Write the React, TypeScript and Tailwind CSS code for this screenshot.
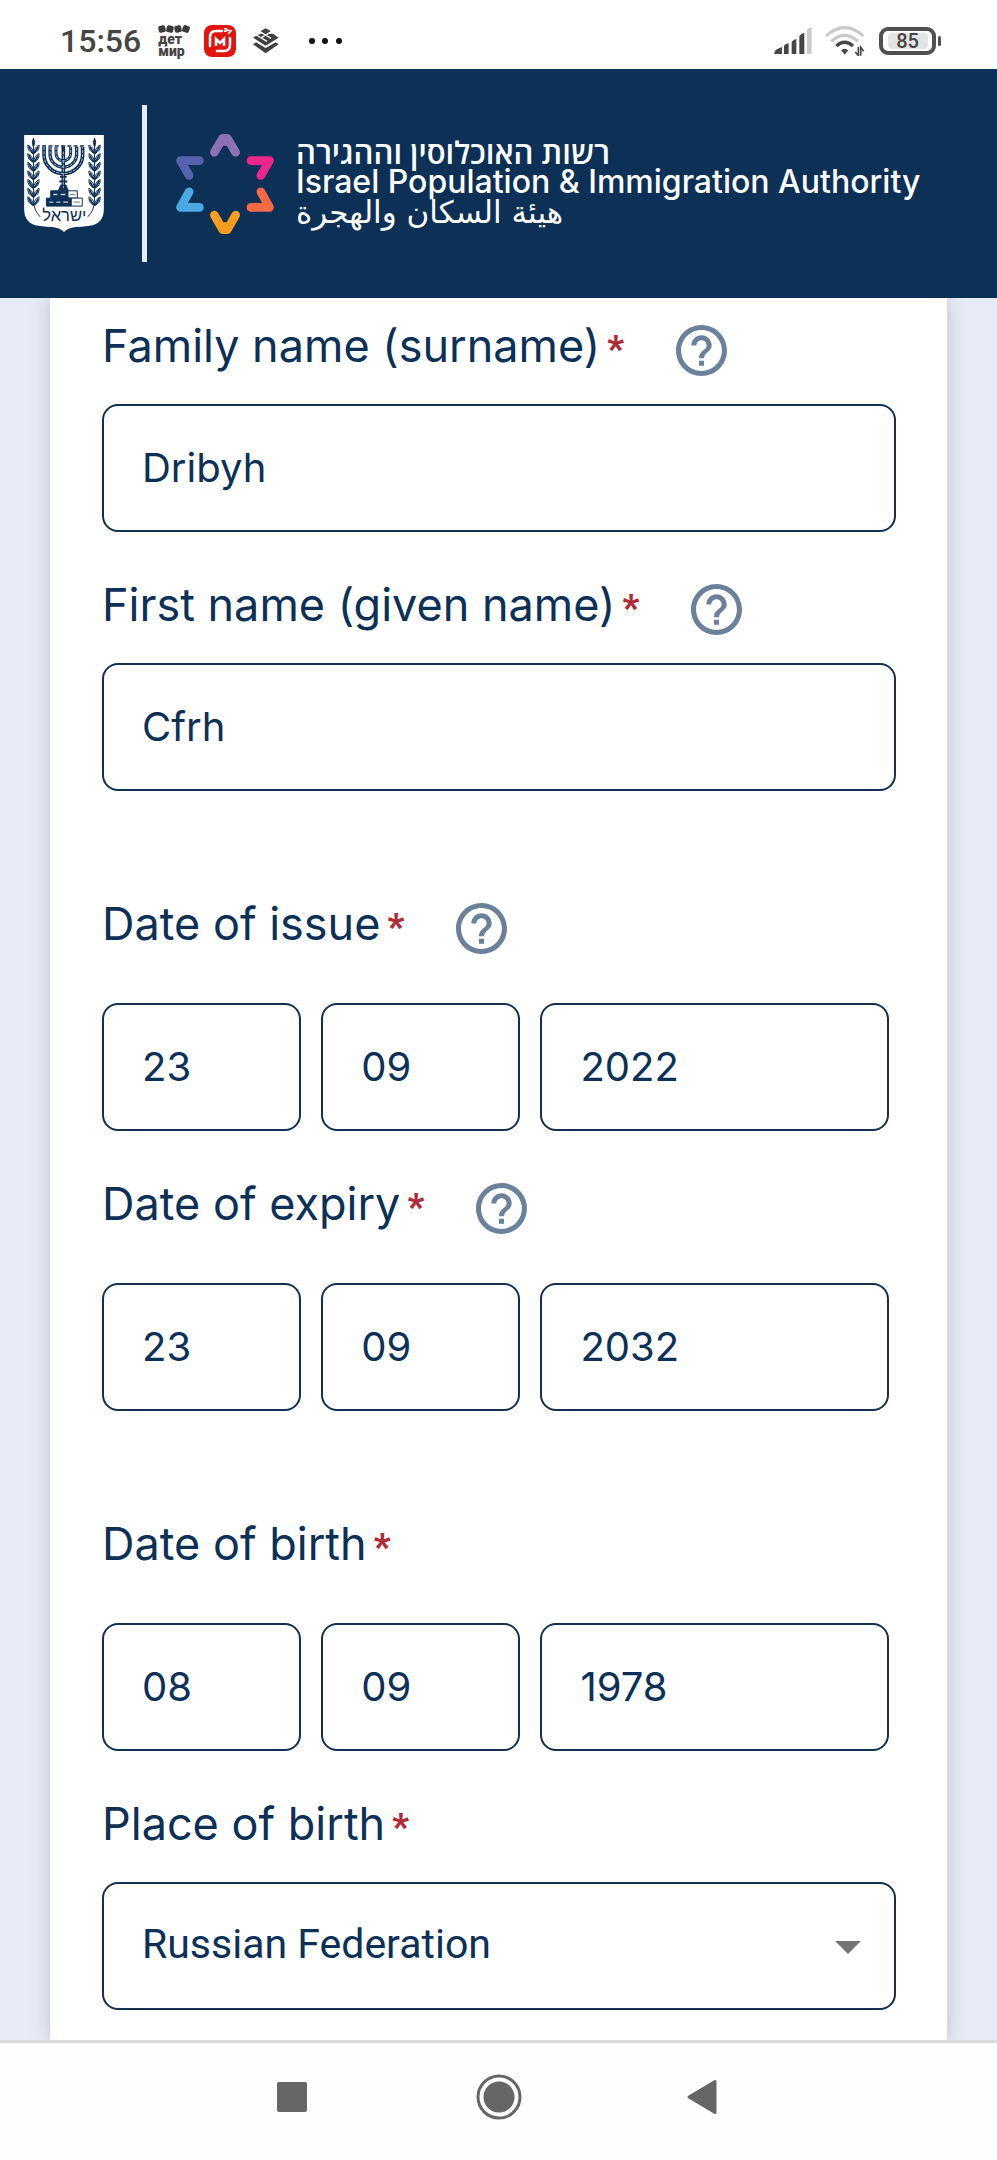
import React from "react";

const leafRows = [34, 60, 86, 112, 138, 164, 190];

function Branch() {
  return (
    <g stroke="#0d3056" fill="none" strokeWidth="3">
      <path d="M28 12V200Q30 228 48 246" />
      <path d="M28 10q-7 12 0 26q7-14 0-26Z" fill="#0d3056" />
      {leafRows.map((y) => (
        <g key={y} transform={`translate(28 ${y})`}>
          <path d="M0 22Q-18 16-17-4Q-2 4 0 22Z" />
          <path d="M0 22Q-10 12-14 0" strokeWidth="5" />
          <path d="M0 22Q18 16 17-4Q2 4 0 22Z" />
          <path d="M2 20Q8 14 14 2" strokeWidth="5" />
        </g>
      ))}
    </g>
  );
}

function Emblem() {
  return (
    <svg viewBox="0 0 240 292" className="h-[97px] w-20 shrink-0" role="img" aria-label="State emblem">
      <path
        d="M0 0H240V222Q240 262 206 272Q190 276 158 277Q132 278 120 292Q108 278 82 277Q50 276 34 272Q0 262 0 222Z"
        fill="#fff"
      />
      <Branch />
      <g transform="translate(240 0) scale(-1 1)">
        <Branch />
      </g>
      <g fill="none" stroke="#0d3056">
        <path d="M60 36V60A58 56 0 0 0 176 60V36" strokeWidth="11" />
        <path d="M78 36V58A40 39 0 0 0 158 58V36" strokeWidth="10" />
        <path d="M96 36V56A22 22 0 0 0 140 56V36" strokeWidth="9" />
        <path d="M118 34V166" strokeWidth="11" />
        <path d="M108 126H128M106 140H130" strokeWidth="6" />
        <path d="M110 150L102 167H134L126 150Z" fill="#0d3056" />
      </g>
      <g fill="none" stroke="#fff" strokeWidth="2" strokeDasharray="9 4">
        <path d="M60 36V60A58 56 0 0 0 176 60V36" />
        <path d="M78 36V58A40 39 0 0 0 158 58V36" />
        <path d="M96 36V56A22 22 0 0 0 140 56V36" />
        <path d="M118 50V160" />
      </g>
      <g stroke="#0d3056" strokeWidth="3">
        <path d="M54 33H182" strokeWidth="5" strokeDasharray="12 7" />
        <path d="M80 168H132V190H80Z" fill="#0d3056" />
        <path d="M132 168H160V190H132Z" fill="#fff" />
        <path d="M67 190H142V214H67Z" fill="#0d3056" />
        <path d="M142 190H175V214H142Z" fill="#fff" />
        <path d="M88 179H100M110 179H124M76 202H88M97 202H109M118 202H132" stroke="#c5d0dc" strokeWidth="4" />
        <path d="M138 179H154M149 202H168" strokeWidth="2" />
      </g>
      <text
        x="121"
        y="260"
        textAnchor="middle"
        fontSize="50"
        fill="#0d3056"
        className="font-['Liberation_Sans',sans-serif]"
      >
        ישראל
      </text>
    </svg>
  );
}

function Star() {
  return (
    <svg
      viewBox="528 128 294 301"
      className="h-[100px] w-[98px] shrink-0"
      fill="none"
      strokeWidth="26"
      strokeLinecap="round"
      strokeLinejoin="round"
      aria-hidden="true"
    >
      <path d="M643 183L668 141H682L707 183M668 150H682" stroke="#8c72b5" />
      <path d="M598 208H541L567 253" stroke="#5562ae" />
      <path d="M753 208H809L783 253" stroke="#ec268a" />
      <path d="M567 302L541 349H598" stroke="#4aa9e2" />
      <path d="M783 302L809 349H753" stroke="#f26a43" />
      <path d="M643 372L668 416H682L707 372M668 407H682" stroke="#f99d20" />
    </svg>
  );
}

function StatusBar() {
  return (
    <div className="flex h-[69px] items-center justify-between bg-white pt-3 pr-14 pl-[60px] text-[#454545]">
      <div className="flex items-center">
        <span className="font-['Roboto',sans-serif] text-[32px] leading-8 font-medium">15:56</span>
        <div className="ml-[17px] flex w-8 flex-col items-start">
          <svg viewBox="0 0 32 8" className="h-2 w-8" fill="#3a3a3a" aria-hidden="true">
            <rect x="0.500" y="0.500" width="7" height="7" rx="2" transform="rotate(-12 4 4)" />
            <rect x="8.500" y="0.500" width="7" height="7" rx="2" transform="rotate(12 12 4)" />
            <rect x="16.500" y="0.500" width="7" height="7" rx="2" transform="rotate(-12 20 4)" />
            <rect x="24.500" y="0.500" width="7" height="7" rx="2" transform="rotate(20 28 4)" />
          </svg>
          <span className="font-['Roboto',sans-serif] text-[14px] leading-3 font-black">дет</span>
          <span className="font-['Roboto',sans-serif] text-[14px] leading-3 font-black">мир</span>
        </div>
        <svg viewBox="0 0 32 32" className="ml-3.5 size-8" aria-hidden="true">
          <rect width="32" height="32" rx="8" fill="#e1150f" />
          <path
            d="M18 6H12Q6 6 6 12V21M26 13V20Q26 26 20 26H13"
            fill="none"
            stroke="#fff"
            strokeWidth="2.500"
            strokeLinecap="round"
          />
          <path d="M12 21V14L16 18L20 14V21" fill="none" stroke="#fff" strokeWidth="2.500" />
          <path d="M20 4q3-1 3 1q0 2-3 1M23 5l4 1l-3 3" fill="none" stroke="#fff" strokeWidth="1.500" />
        </svg>
        <svg viewBox="0 0 78 78" className="ml-[17px] size-[26px]" aria-hidden="true">
          <path d="M0 49L9 43L38 60L68 43L77 49L38 76Z" fill="#404040" />
          <path d="M0 29L22 17L60 17L77 29L38 53Z" fill="#404040" />
          <path d="M38 1L54 10L38 20L22 10Z" fill="#404040" />
          <path d="M20 11L38 21L56 11M38 21L22 31M38 21L54 31M10 21L42 40" fill="none" stroke="#fff" strokeWidth="4" />
        </svg>
        <svg viewBox="0 0 34 6" className="ml-[30px] h-1.5 w-[34px]" fill="#111" aria-hidden="true">
          <circle cx="3" cy="3" r="3" />
          <circle cx="16" cy="3" r="3" />
          <circle cx="30" cy="3" r="3" />
        </svg>
      </div>
      <div className="flex items-center">
        <svg viewBox="0 0 114 84" className="h-7 w-[38px]" fill="#454545" aria-hidden="true">
          <path d="M1 81Q0 72 10 66L24 60V81Z" />
          <path d="M30 56Q36 50 44 49V81H30ZM53 44Q59 38 67 36V81H53ZM76 27Q82 20 91 17V81H76Z" />
          <path d="M99 8Q105 2 113 1V81H99Z" fill="#cacaca" />
        </svg>
        <svg viewBox="0 0 120 90" className="ml-[13px] h-[30px] w-10" fill="none" strokeWidth="9" aria-hidden="true">
          <path d="M3 30Q59-20 115 30" stroke="#c8c8c8" />
          <path d="M19 46Q59 10 99 46" stroke="#c8c8c8" />
          <path d="M34 60Q59 38 84 60" stroke="#484848" strokeWidth="10" />
          <path d="M48 73Q59 64 70 73L59 86Z" fill="#484848" />
          <path d="M100 63V89L91 78M107 89V64L116 76" stroke="#484848" strokeWidth="5" />
        </svg>
        <div className="ml-3.5 flex h-7 w-[57px] items-center justify-center rounded-[9px] border-4 border-[#505050]">
          <span className="flex h-4 w-10 items-center justify-center rounded-sm bg-[#e4e4e4] font-['Roboto',sans-serif] text-[20px] leading-5 font-medium">
            85
          </span>
        </div>
        <span className="ml-0.5 h-2.5 w-[3px] rounded-full bg-[#505050]" />
      </div>
    </div>
  );
}

function Header() {
  return (
    <header className="flex h-[229px] items-center bg-[#0d3056] pl-6 text-white">
      <Emblem />
      <div className="ml-[38px] h-[157px] w-[5px] shrink-0 bg-[#e4eefa]" />
      <a href="#home" className="ml-[29px] flex items-center gap-[22px]">
        <Star />
        <div className="flex flex-col items-start pb-[3px] font-['Inter',sans-serif] text-[32px] leading-[30px] font-medium whitespace-nowrap">
          <span lang="he" dir="rtl" className="font-['Open_Sans','Liberation_Sans',sans-serif] text-[31px] font-semibold">
            רשות האוכלוסין וההגירה
          </span>
          <span>Israel Population &amp; Immigration Authority</span>
          <span lang="ar" dir="rtl" className="font-['DejaVu_Sans',sans-serif] text-[31px]">
            هيئة السكان والهجرة
          </span>
        </div>
      </a>
    </header>
  );
}

function HelpButton({ topic }: { topic: string }) {
  return (
    <button type="button" aria-label={`Help: ${topic}`} className="ml-[52px] pt-1.5">
      <svg viewBox="2 2 20 20" className="size-[51px]" fill="#6b8099" aria-hidden="true">
        <path d="M11 18h2v-2h-2v2zm1-16C6.48 2 2 6.48 2 12s4.48 10 10 10 10-4.48 10-10S17.52 2 12 2zm0 18c-4.41 0-8-3.59-8-8s3.59-8 8-8 8 3.59 8 8-3.59 8-8 8zm0-14c-2.21 0-4 1.79-4 4h2c0-1.1.9-2 2-2s2 .9 2 2c0 2-3 1.75-3 5h2c0-2.25 3-2.5 3-5 0-2.21-1.79-4-4-4z" />
      </svg>
    </button>
  );
}

function FieldLabel({ id, text, help }: { id: string; text: string; help?: boolean }) {
  return (
    <div className="flex h-[52px] items-center">
      <label htmlFor={id} className="flex text-[45px] leading-[52px] whitespace-nowrap">
        {text}
        <span className="ml-[7px] pt-[3px] font-['Roboto',sans-serif] text-[36px] leading-[52px] font-black text-[#b02a37]">
          *
        </span>
      </label>
      {help && <HelpButton topic={text} />}
    </div>
  );
}

const control = "h-32 w-full min-w-0 rounded-2xl border-2 border-[#14304f] bg-white pb-0.5 pl-[38px] text-[40px] outline-none";

function TextField({ id, label, value }: { id: string; label: string; value: string }) {
  return (
    <div className="flex flex-col gap-[31px]">
      <FieldLabel id={id} text={label} help />
      <input id={id} type="text" defaultValue={value} className={control} />
    </div>
  );
}

function DateField({ id, label, value, help }: { id: string; label: string; value: string[]; help?: boolean }) {
  return (
    <div className="flex flex-col gap-[52px]">
      <FieldLabel id={id} text={label} help={help} />
      <div className="grid grid-cols-[4fr_4fr_7fr] gap-5 pr-[7px]">
        <input id={id} inputMode="numeric" defaultValue={value[0]} className={control} />
        <input aria-label={`${label}, month`} inputMode="numeric" defaultValue={value[1]} className={control} />
        <input aria-label={`${label}, year`} inputMode="numeric" defaultValue={value[2]} className={control} />
      </div>
    </div>
  );
}

function NavBar() {
  return (
    <nav className="flex h-[120px] items-center justify-center gap-[158px] border-t-[3px] border-[#d9dadc] bg-[#fefefe] pb-2.5">
      <button type="button" aria-label="Recent apps">
        <svg viewBox="0 0 48 48" className="size-12" fill="#666">
          <rect x="8" y="9" width="30" height="30" rx="2" />
        </svg>
      </button>
      <button type="button" aria-label="Home">
        <svg viewBox="0 0 48 48" className="size-12" fill="#666">
          <circle cx="24" cy="24" r="21" fill="none" stroke="#666" strokeWidth="3" />
          <circle cx="24" cy="24" r="15.5" />
        </svg>
      </button>
      <button type="button" aria-label="Back">
        <svg viewBox="0 0 48 48" className="size-12" fill="#666" stroke="#666" strokeWidth="3" strokeLinejoin="round">
          <path d="M8 24L34 8.500V39.500Z" />
        </svg>
      </button>
    </nav>
  );
}

export default function App() {
  return (
    <div className="flex min-h-screen flex-col bg-[#e7ebf5] font-['Inter',sans-serif] text-[#0d3056]">
      <StatusBar />
      <Header />
      <main className="flex grow flex-col overflow-hidden px-[50px]">
        <form className="flex grow flex-col gap-[108px] bg-white pt-[23px] pr-[51px] pb-[29px] pl-[52px] shadow-[0_0_18px_rgba(60,75,100,0.25)]">
          <div className="flex flex-col gap-12">
            <TextField id="surname" label="Family name (surname)" value="Dribyh" />
            <TextField id="given-name" label="First name (given name)" value="Cfrh" />
          </div>
          <div className="flex flex-col gap-12">
            <DateField id="issue" label="Date of issue" value={["23", "09", "2022"]} help />
            <DateField id="expiry" label="Date of expiry" value={["23", "09", "2032"]} help />
          </div>
          <div className="flex flex-col gap-12">
            <DateField id="birth" label="Date of birth" value={["08", "09", "1978"]} />
            <div className="flex flex-col gap-[31px]">
              <FieldLabel id="country" text="Place of birth" />
              <div className="relative">
                <select
                  id="country"
                  defaultValue="ru"
                  className="h-32 w-full appearance-none rounded-2xl border-2 border-[#14304f] bg-white pb-0.5 pl-[38px] font-['Roboto',sans-serif] text-[41px] outline-none"
                >
                  <option value="ru">Russian Federation</option>
                </select>
                <svg
                  viewBox="0 0 26 13"
                  className="pointer-events-none absolute top-[59px] right-[35px] h-[13px] w-[26px]"
                  fill="#757575"
                  aria-hidden="true"
                >
                  <path d="M0 0H26L13 13Z" />
                </svg>
              </div>
            </div>
          </div>
        </form>
      </main>
      <NavBar />
    </div>
  );
}
